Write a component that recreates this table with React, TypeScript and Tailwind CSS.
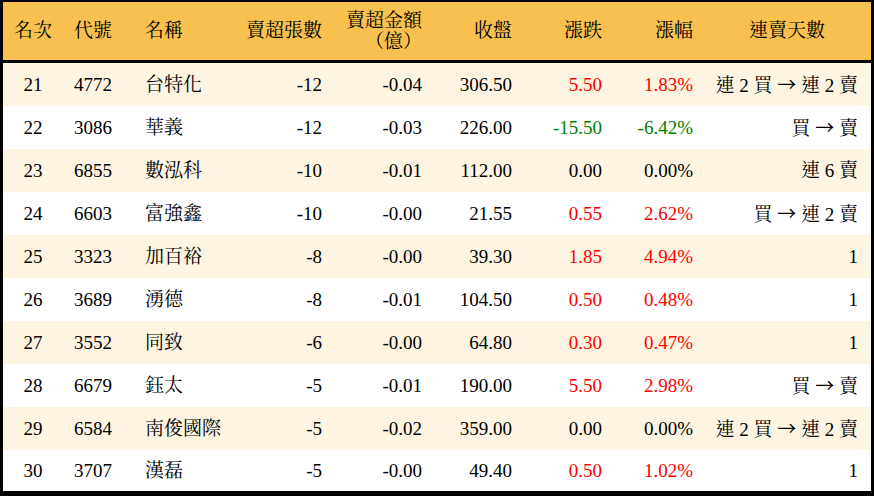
const rows = [
  { rank: 21, code: "4772", name: "台特化", lots: "-12", amount: "-0.04", close: "306.50", change: "5.50", pct: "1.83%", tone: "up", streak: "連 2 買 → 連 2 賣" },
  { rank: 22, code: "3086", name: "華義", lots: "-12", amount: "-0.03", close: "226.00", change: "-15.50", pct: "-6.42%", tone: "down", streak: "買 → 賣" },
  { rank: 23, code: "6855", name: "數泓科", lots: "-10", amount: "-0.01", close: "112.00", change: "0.00", pct: "0.00%", tone: "flat", streak: "連 6 賣" },
  { rank: 24, code: "6603", name: "富強鑫", lots: "-10", amount: "-0.00", close: "21.55", change: "0.55", pct: "2.62%", tone: "up", streak: "買 → 連 2 賣" },
  { rank: 25, code: "3323", name: "加百裕", lots: "-8", amount: "-0.00", close: "39.30", change: "1.85", pct: "4.94%", tone: "up", streak: "1" },
  { rank: 26, code: "3689", name: "湧德", lots: "-8", amount: "-0.01", close: "104.50", change: "0.50", pct: "0.48%", tone: "up", streak: "1" },
  { rank: 27, code: "3552", name: "同致", lots: "-6", amount: "-0.00", close: "64.80", change: "0.30", pct: "0.47%", tone: "up", streak: "1" },
  { rank: 28, code: "6679", name: "鈺太", lots: "-5", amount: "-0.01", close: "190.00", change: "5.50", pct: "2.98%", tone: "up", streak: "買 → 賣" },
  { rank: 29, code: "6584", name: "南俊國際", lots: "-5", amount: "-0.02", close: "359.00", change: "0.00", pct: "0.00%", tone: "flat", streak: "連 2 買 → 連 2 賣" },
  { rank: 30, code: "3707", name: "漢磊", lots: "-5", amount: "-0.00", close: "49.40", change: "0.50", pct: "1.02%", tone: "up", streak: "1" },
];

const toneClass: Record<string, string> = {
  up: "text-[#ff0000]",
  down: "text-[#008000]",
  flat: "text-black",
};

// the arrow comes from the CJK face so it is full width, like the source
function Streak({ text }: { text: string }) {
  const parts = text.split("→");
  return (
    <>
      {parts.map((part, index) => (
        <span key={index}>
          {index > 0 && (
            <span style={{ fontFamily: '"Noto Sans CJK TC", "Noto Serif CJK TC", sans-serif' }}>→</span>
          )}
          {part}
        </span>
      ))}
    </>
  );
}

export default function App() {
  return (
    <div
      className="box-border h-[496px] w-[874px] overflow-hidden border-x-[3px] border-t-2 border-b-[5px] border-black bg-white text-[19px] text-black"
      style={{ fontFamily: '"Liberation Serif", "Noto Serif CJK TC", "Noto Sans CJK TC", serif' }}
    >
      <table className="w-full table-fixed border-separate border-spacing-0">
        <colgroup>
          <col className="w-[60px]" />
          <col className="w-[60px]" />
          <col className="w-[109px]" />
          <col className="w-[100px]" />
          <col className="w-[100px]" />
          <col className="w-[90px]" />
          <col className="w-[90px]" />
          <col className="w-[91px]" />
          <col className="w-[168px]" />
        </colgroup>
        <thead>
          <tr className="bg-[#f8c04f]">
            <th className="h-[61px] border-b-[3px] border-black p-0 text-center font-normal">名次</th>
            <th className="border-b-[3px] border-black p-0 text-center font-normal">代號</th>
            <th className="border-b-[3px] border-black p-0 pl-[22px] text-left font-normal">名稱</th>
            <th className="border-b-[3px] border-black p-0 pr-[10px] text-right font-normal">賣超張數</th>
            <th className="border-b-[3px] border-black p-0 pr-[10px] text-right font-normal leading-[21px]">
              賣超金額
              <br />
              （億）
            </th>
            <th className="border-b-[3px] border-black p-0 pr-[10px] text-right font-normal">收盤</th>
            <th className="border-b-[3px] border-black p-0 pr-[10px] text-right font-normal">漲跌</th>
            <th className="border-b-[3px] border-black p-0 pr-[10px] text-right font-normal">漲幅</th>
            <th className="border-b-[3px] border-black p-0 text-center font-normal">連賣天數</th>
          </tr>
        </thead>
        <tbody>
          {rows.map((row, index) => (
            <tr className={index % 2 === 0 ? "bg-[#fdf5e2]" : "bg-white"} key={row.rank}>
              <td className={`${index === rows.length - 1 ? "h-[41px]" : "h-[43px]"} p-0 pt-[2px] text-center`}>
                {row.rank}
              </td>
              <td className="p-0 pt-[2px] text-center">{row.code}</td>
              <td className="p-0 pt-[2px] pl-[22px] text-left">{row.name}</td>
              <td className="p-0 pt-[2px] pr-[10px] text-right">{row.lots}</td>
              <td className="p-0 pt-[2px] pr-[10px] text-right">{row.amount}</td>
              <td className="p-0 pt-[2px] pr-[10px] text-right">{row.close}</td>
              <td className={`p-0 pt-[2px] pr-[10px] text-right ${toneClass[row.tone]}`}>{row.change}</td>
              <td className={`p-0 pt-[2px] pr-[10px] text-right ${toneClass[row.tone]}`}>{row.pct}</td>
              <td className="whitespace-pre p-0 pt-[2px] pr-[13px] text-right">
                <Streak text={row.streak} />
              </td>
            </tr>
          ))}
        </tbody>
      </table>
    </div>
  );
}
